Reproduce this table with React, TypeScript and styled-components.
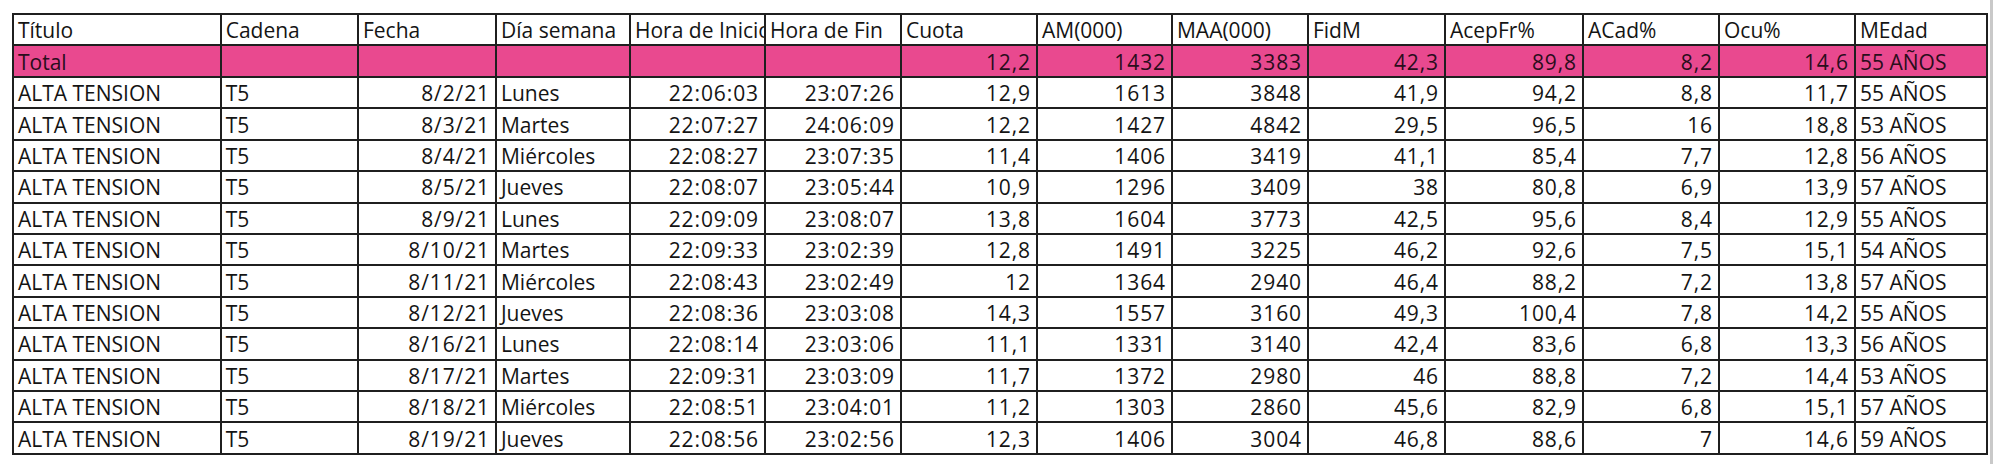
import styled, { createGlobalStyle } from "styled-components";

const GlobalStyle = createGlobalStyle`
  html, body {
    margin: 0;
    padding: 0;
    background: #ffffff;
  }
  body {
    font-family: "Open Sans", Lato, "Liberation Sans", sans-serif;
    color: #141414;
  }
`;

type Align = "left" | "right";

interface Column {
  title: string;
  width: number;
  align: Align;
}

const columns: Column[] = [
  { title: "Título", width: 207.7, align: "left" },
  { title: "Cadena", width: 137.3, align: "left" },
  { title: "Fecha", width: 138, align: "right" },
  { title: "Día semana", width: 134, align: "left" },
  { title: "Hora de Inicio", width: 135, align: "right" },
  { title: "Hora de Fin", width: 136, align: "right" },
  { title: "Cuota", width: 136, align: "right" },
  { title: "AM(000)", width: 135, align: "right" },
  { title: "MAA(000)", width: 136, align: "right" },
  { title: "FidM", width: 137, align: "right" },
  { title: "AcepFr%", width: 138, align: "right" },
  { title: "ACad%", width: 136, align: "right" },
  { title: "Ocu%", width: 136, align: "right" },
  { title: "MEdad", width: 132, align: "left" },
];

const total = ["Total", "", "", "", "", "", "12,2", "1432", "3383", "42,3", "89,8", "8,2", "14,6", "55 AÑOS"];

// fecha, día, inicio, fin, cuota, am, maa, fidm, acepfr, acad, ocu, edad
const emisiones = [
  ["8/2/21", "Lunes", "22:06:03", "23:07:26", "12,9", "1613", "3848", "41,9", "94,2", "8,8", "11,7", "55 AÑOS"],
  ["8/3/21", "Martes", "22:07:27", "24:06:09", "12,2", "1427", "4842", "29,5", "96,5", "16", "18,8", "53 AÑOS"],
  ["8/4/21", "Miércoles", "22:08:27", "23:07:35", "11,4", "1406", "3419", "41,1", "85,4", "7,7", "12,8", "56 AÑOS"],
  ["8/5/21", "Jueves", "22:08:07", "23:05:44", "10,9", "1296", "3409", "38", "80,8", "6,9", "13,9", "57 AÑOS"],
  ["8/9/21", "Lunes", "22:09:09", "23:08:07", "13,8", "1604", "3773", "42,5", "95,6", "8,4", "12,9", "55 AÑOS"],
  ["8/10/21", "Martes", "22:09:33", "23:02:39", "12,8", "1491", "3225", "46,2", "92,6", "7,5", "15,1", "54 AÑOS"],
  ["8/11/21", "Miércoles", "22:08:43", "23:02:49", "12", "1364", "2940", "46,4", "88,2", "7,2", "13,8", "57 AÑOS"],
  ["8/12/21", "Jueves", "22:08:36", "23:03:08", "14,3", "1557", "3160", "49,3", "100,4", "7,8", "14,2", "55 AÑOS"],
  ["8/16/21", "Lunes", "22:08:14", "23:03:06", "11,1", "1331", "3140", "42,4", "83,6", "6,8", "13,3", "56 AÑOS"],
  ["8/17/21", "Martes", "22:09:31", "23:03:09", "11,7", "1372", "2980", "46", "88,8", "7,2", "14,4", "53 AÑOS"],
  ["8/18/21", "Miércoles", "22:08:51", "23:04:01", "11,2", "1303", "2860", "45,6", "82,9", "6,8", "15,1", "57 AÑOS"],
  ["8/19/21", "Jueves", "22:08:56", "23:02:56", "12,3", "1406", "3004", "46,8", "88,6", "7", "14,6", "59 AÑOS"],
];

const rows = emisiones.map((r) => ["ALTA TENSION", "T5", ...r]);

function App() {
  return (
    <>
      <GlobalStyle />
      <Page>
        <Sheet>
          <colgroup>
            {columns.map((c) => (
              <col key={c.title} style={{ width: c.width }} />
            ))}
          </colgroup>
          <thead>
            <Row>
              {columns.map((c) => (
                <HeadCell key={c.title}>{c.title}</HeadCell>
              ))}
            </Row>
          </thead>
          <tbody>
            <Row $total>
              {total.map((v, i) => (
                <Cell key={i} $align={columns[i].align}>
                  {v}
                </Cell>
              ))}
            </Row>
            {rows.map((r, ri) => (
              <Row key={ri}>
                {r.map((v, i) => (
                  <Cell key={i} $align={columns[i].align}>
                    {v}
                  </Cell>
                ))}
              </Row>
            ))}
          </tbody>
        </Sheet>
        <EdgeStrip />
      </Page>
    </>
  );
}

const Page = styled.div`
  display: flex;
  align-items: flex-start;
  height: 464px;
  padding: 13px 0 0 12px;
  box-sizing: border-box;
  overflow: hidden;
`;

const Sheet = styled.table`
  width: 1975px;
  table-layout: fixed;
  border-collapse: collapse;
  border: 2px solid #1a1a1a;
  font-size: 21px;
`;

const Row = styled.tr<{ $total?: boolean }>`
  height: 31.43px;
  background: ${(p) => (p.$total ? "#e9498f" : "#ffffff")};
  color: ${(p) => (p.$total ? "#2a0d1c" : "#141414")};
`;

const HeadCell = styled.th`
  border: 2px solid #1f1f1f;
  padding: 0 0 1px 4px;
  font-weight: 400;
  text-align: left;
  vertical-align: bottom;
  white-space: nowrap;
  overflow: hidden;
  line-height: 1.2;
`;

const Cell = styled.td<{ $align: Align }>`
  border: 2px solid #1f1f1f;
  padding: ${(p) => (p.$align === "right" ? "0 5px 1px 2px" : "0 4px 1px 4px")};
  text-align: ${(p) => p.$align};
  letter-spacing: ${(p) => (p.$align === "right" ? "0.9px" : "0")};
  vertical-align: bottom;
  white-space: nowrap;
  overflow: hidden;
  line-height: 1.2;
`;

const EdgeStrip = styled.div`
  flex: none;
  width: 3px;
  height: 464px;
  margin: -13px 0 0 2px;
  background: #c9c9c9;
`;

export default App;
